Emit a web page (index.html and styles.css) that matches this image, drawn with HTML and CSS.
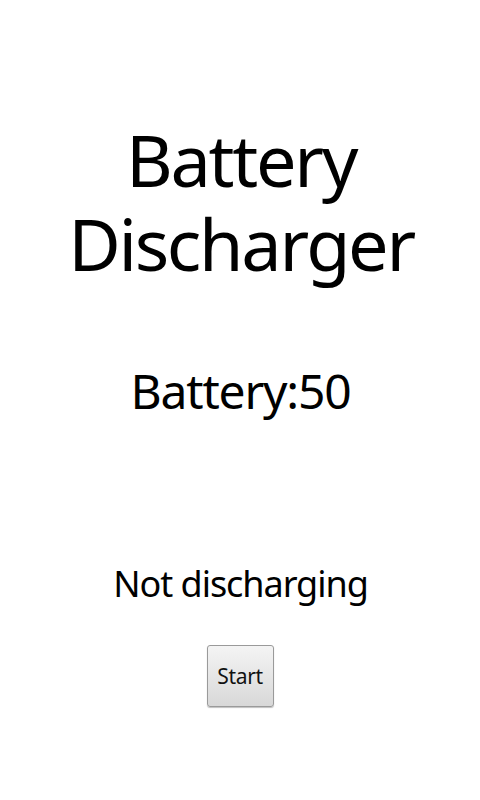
FILE: index.html
```html
<!DOCTYPE html>
<html>
<head>
<meta charset="utf-8">
<link rel="stylesheet" href="styles.css">
</head>
<body>
<main class="screen">
  <h1 class="title">Battery<br>Discharger</h1>
  <p class="level">Battery:50</p>
  <p class="status">Not discharging</p>
  <button class="start">Start</button>
</main>
</body>
</html>
```
FILE: styles.css
```css
html, body {
  margin: 0;
  padding: 0;
  background: #ffffff;
}
.screen {
  width: 480px;
  height: 800px;
  display: flex;
  flex-direction: column;
  align-items: center;
  font-family: "Noto Sans", "Open Sans", sans-serif;
  color: #000000;
}
.title {
  margin: 117px 0 0;
  padding-left: 2px;
  font-size: 72px;
  line-height: 84px;
  font-weight: normal;
  letter-spacing: -2.3px;
  text-align: center;
}
.level {
  margin: 78px 0 0;
  padding-left: 1px;
  font-size: 48px;
  line-height: 56px;
  letter-spacing: -1.2px;
}
.status {
  margin: 144px 0 0;
  padding-left: 1px;
  font-size: 36px;
  line-height: 42px;
  letter-spacing: -1.05px;
}
.start {
  margin-top: 40px;
  width: 67px;
  height: 62px;
  padding: 0;
  font-family: "Noto Sans", "Open Sans", sans-serif;
  font-size: 21px;
  letter-spacing: -0.3px;
  color: #111111;
  border: 1px solid #9a9a9a;
  border-radius: 3px;
  background: linear-gradient(#f4f4f4, #d8d8d8);
  box-shadow: 0 1px 1px rgba(0,0,0,0.25);
}
```
